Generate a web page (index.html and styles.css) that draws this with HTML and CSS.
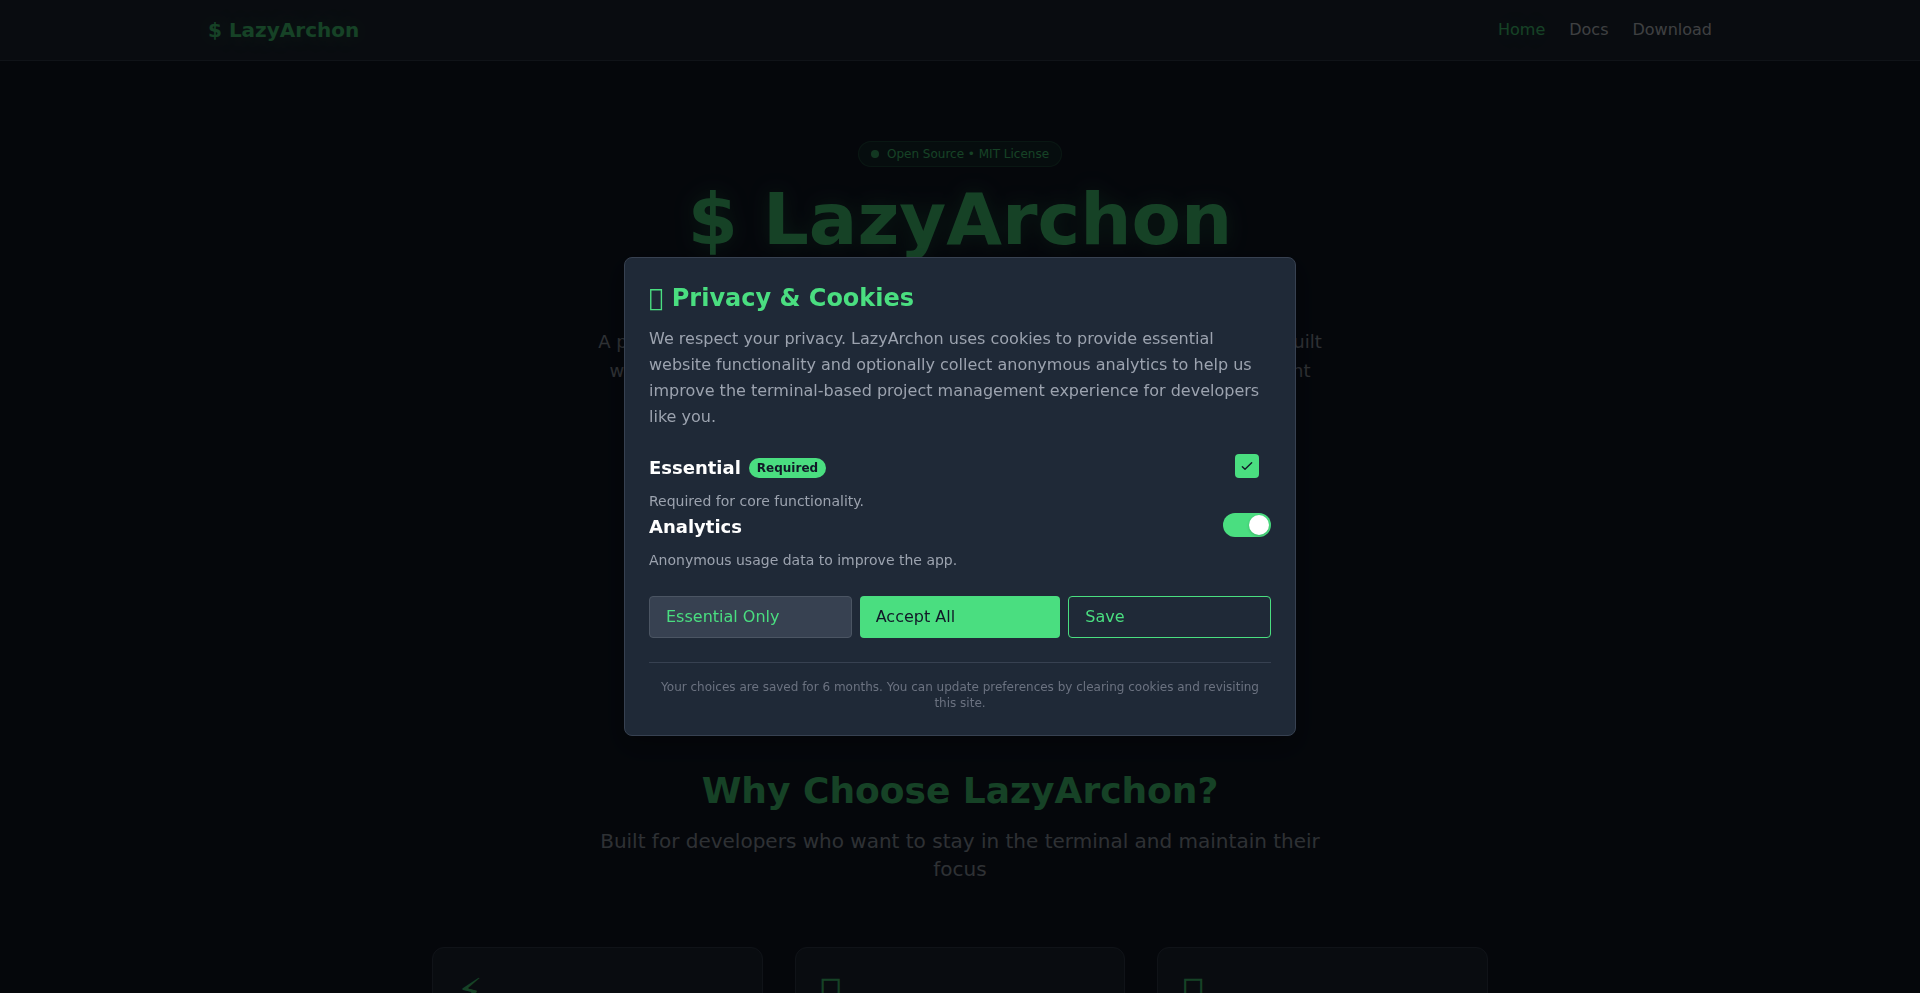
FILE: index.html
```
<!DOCTYPE html>
<html lang="en">
<head>
    <meta charset="UTF-8">
    <meta name="viewport" content="width=device-width, initial-scale=1.0">
    <title>LazyArchon</title>
    <link rel="stylesheet" href="styles.css">
</head>
<body>
    <!-- Navbar -->
    <header class="navbar">
        <nav class="navbar-inner">
            <a class="brand" href="#">$ LazyArchon</a>
            <ul class="nav-links">
                <li><a class="active" href="#">Home</a></li>
                <li><a href="#docs">Docs</a></li>
                <li><a href="#download">Download</a></li>
            </ul>
        </nav>
    </header>

    <main>
        <!-- Hero -->
        <section class="hero">
            <div class="pill"><span class="dot"></span>Open Source • MIT License</div>
            <h1>$ LazyArchon</h1>
            <p class="intro">A powerful terminal-based project management interface for Archon users, built<br>with Go and Bubble Tea for fast keyboard-driven developer task management</p>
        </section>

        <!-- Features -->
        <section class="features">
            <h2>Why Choose LazyArchon?</h2>
            <p class="features-intro">Built for developers who want to stay in the terminal and maintain their focus</p>
            <div class="cards">
                <article class="card">
                    <div class="card-icon">⚡</div>
                </article>
                <article class="card">
                    <div class="card-icon">&#x10FFFD;</div>
                </article>
                <article class="card">
                    <div class="card-icon">&#x10FFFD;</div>
                </article>
            </div>
        </section>
    </main>

    <!-- Cookie consent -->
    <div class="overlay">
        <div class="modal" role="dialog" aria-modal="true" aria-labelledby="consentTitle">
            <h2 id="consentTitle">&#x10FFFD; Privacy &amp; Cookies</h2>
            <p class="modal-text">We respect your privacy. LazyArchon uses cookies to provide essential website functionality and optionally collect anonymous analytics to help us improve the terminal-based project management experience for developers like you.</p>

            <div class="option">
                <div>
                    <div class="option-title"><label for="essential">Essential</label><span class="badge">Required</span></div>
                    <p>Required for core functionality.</p>
                </div>
                <div class="check">
                    <input type="checkbox" id="essential" checked disabled>
                    <svg viewBox="0 0 24 24" fill="none" stroke="currentColor" stroke-width="2" stroke-linecap="round" stroke-linejoin="round"><path d="M5 13l4 4L19 7"/></svg>
                </div>
            </div>
            <div class="option">
                <div>
                    <div class="option-title"><label for="analytics">Analytics</label></div>
                    <p>Anonymous usage data to improve the app.</p>
                </div>
                <input type="checkbox" class="switch" id="analytics" checked>
            </div>

            <div class="actions">
                <button type="button" class="btn-essential">Essential Only</button>
                <button type="button" class="btn-accept">Accept All</button>
                <button type="button" class="btn-save">Save</button>
            </div>
            <p class="modal-note">Your choices are saved for 6 months. You can update preferences by clearing cookies and revisiting this site.</p>
        </div>
    </div>
</body>
</html>
```

FILE: styles.css
```
* {
    box-sizing: border-box;
    margin: 0;
    padding: 0;
}

body {
    font-family: "DejaVu Sans", sans-serif;
    font-size: 16px;
    line-height: 24px;
    background-color: #111827;
    color: #d1d5db;
    height: 100vh;
    overflow: hidden;
}

a {
    color: inherit;
    text-decoration: none;
}

/* Navbar */
.navbar {
    background: #1f2937;
    border-bottom: 1px solid #374151;
}

.navbar-inner {
    display: flex;
    justify-content: space-between;
    align-items: center;
    max-width: 1536px;
    height: 60px;
    margin: 0 auto;
    padding: 0 16px;
}

.brand {
    font-size: 20px;
    font-weight: bold;
    line-height: 28px;
    color: #4ade80;
    text-shadow: 0 0 20px rgba(74, 222, 128, 0.3);
}

.nav-links {
    display: flex;
    gap: 24px;
    list-style: none;
}

.nav-links .active {
    color: #4ade80;
    text-shadow: 0 0 20px rgba(74, 222, 128, 0.3);
}

/* Hero */
.hero {
    display: flex;
    flex-direction: column;
    align-items: center;
    min-height: 646px;
    padding: 80px 16px;
    text-align: center;
}

.pill {
    display: flex;
    align-items: center;
    gap: 8px;
    padding: 4px 12px;
    border: 1px solid rgba(74, 222, 128, 0.2);
    border-radius: 13px;
    background: rgba(74, 222, 128, 0.1);
    color: #4ade80;
    font-size: 12px;
    line-height: 16px;
}

.dot {
    width: 8px;
    height: 8px;
    border-radius: 50%;
    background: #4ade80;
    opacity: 0.8;
}

.hero h1 {
    margin: 16px 0 72px;
    font-size: 72px;
    line-height: 72px;
    color: #4ade80;
    text-shadow: 0 0 20px rgba(74, 222, 128, 0.3);
}

.intro {
    font-size: 18px;
    line-height: 29px;
    color: #9ca3af;
}

/* Features */
.features {
    max-width: 1088px;
    margin: 0 auto;
    padding: 64px 16px;
}

.features h2 {
    font-size: 36px;
    line-height: 40px;
    color: #4ade80;
    text-align: center;
}

.features-intro {
    max-width: 768px;
    margin: 16px auto 64px;
    font-size: 20px;
    line-height: 28px;
    color: #9ca3af;
    text-align: center;
}

.cards {
    display: grid;
    grid-template-columns: repeat(3, 1fr);
    gap: 32px;
}

.card {
    min-height: 200px;
    padding: 24px;
    border: 1px solid #374151;
    border-radius: 12px;
    background: #1f2937;
}

.card-icon {
    font-size: 36px;
    line-height: 40px;
    color: #4ade80;
}

/* Cookie consent */
.overlay {
    position: fixed;
    inset: 0;
    display: flex;
    align-items: center;
    justify-content: center;
    padding: 16px;
    background: rgba(0, 0, 0, 0.7);
}

.modal {
    width: 100%;
    max-width: 672px;
    padding: 24px;
    border: 1px solid #374151;
    border-radius: 8px;
    background: #1f2937;
    box-shadow: 0 10px 25px rgba(0, 0, 0, 0.3);
}

.modal h2 {
    margin-bottom: 12px;
    font-size: 24px;
    line-height: 32px;
    color: #4ade80;
}

.modal-text {
    margin-bottom: 24px;
    line-height: 26px;
    color: #9ca3af;
}

.option {
    display: flex;
    justify-content: space-between;
    align-items: flex-start;
}

.option-title {
    display: flex;
    align-items: center;
    gap: 8px;
    margin-bottom: 8px;
    font-size: 18px;
    font-weight: bold;
    line-height: 28px;
    color: #fff;
}

.option p {
    font-size: 14px;
    line-height: 23px;
    color: #9ca3af;
}

.badge {
    padding: 2px 8px;
    border-radius: 10px;
    background: #4ade80;
    color: #111827;
    font-size: 12px;
    line-height: 16px;
}

.check {
    display: grid;
    place-items: center;
    width: 48px;
}

.check input,
.check svg {
    grid-area: 1 / 1;
}

.check input {
    appearance: none;
    width: 24px;
    height: 24px;
    border-radius: 4px;
    background: #4ade80;
}

.check svg {
    width: 16px;
    height: 16px;
    color: #111827;
    pointer-events: none;
}

.switch {
    appearance: none;
    display: flex;
    width: 48px;
    height: 24px;
    padding: 2px;
    border-radius: 12px;
    background: #4b5563;
    cursor: pointer;
}

.switch::before {
    content: "";
    width: 20px;
    height: 20px;
    border-radius: 50%;
    background: #fff;
    box-shadow: 0 1px 3px rgba(0, 0, 0, 0.2);
}

.switch:checked {
    justify-content: flex-end;
    background: #4ade80;
}

.actions {
    display: flex;
    gap: 8px;
    margin: 24px 0;
}

.actions button {
    flex: 1;
    padding: 8px 16px;
    border: 1px solid #4ade80;
    border-radius: 4px;
    font-family: inherit;
    font-size: 16px;
    line-height: 24px;
    text-align: left;
    color: #4ade80;
    background: none;
    cursor: pointer;
}

.actions .btn-essential {
    background: #374151;
    border-color: #4b5563;
}

.actions .btn-accept {
    border: none;
    background: #4ade80;
    color: #111827;
}

.modal-note {
    padding-top: 16px;
    border-top: 1px solid #374151;
    font-size: 12px;
    line-height: 16px;
    color: #6b7280;
    text-align: center;
}
```
